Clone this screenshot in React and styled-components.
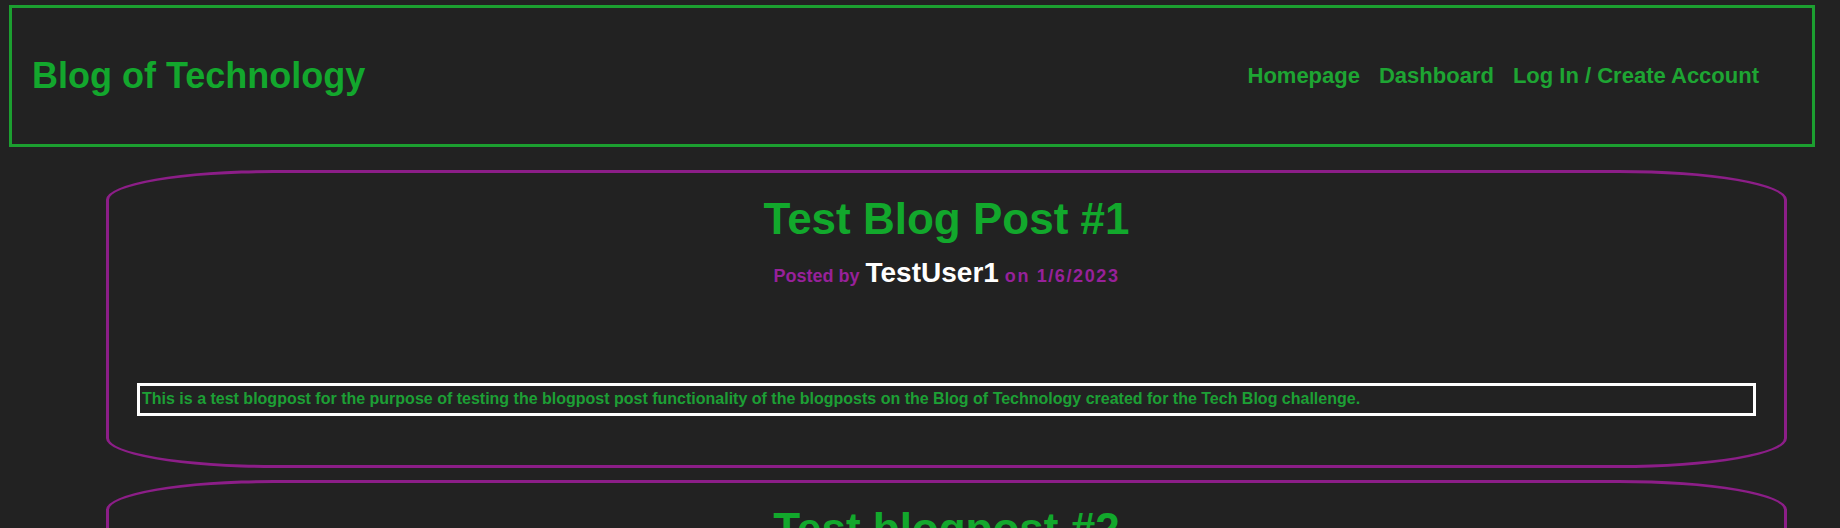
import React from "react";
import styled, { createGlobalStyle } from "styled-components";

const GlobalStyle = createGlobalStyle`
    body {
        margin: 0;
        background: #222222;
        font-family: "Liberation Sans", Arial, sans-serif;
        font-weight: 700;
    }
`;

const Page = styled.div`
    padding: 5px 25px 0 9px;
`;

const Header = styled.header`
    box-sizing: border-box;
    height: 142px;
    border: 3px solid #1c9f30;
    display: flex;
    align-items: center;
    justify-content: space-between;
    padding: 0 53px 0 20px;

    h1 {
        margin: 0;
        font-size: 36px;
        color: #13a72d;
    }
`;

const Nav = styled.nav`
    display: flex;
    gap: 19px;

    a {
        color: #1ea533;
        font-size: 22px;
        text-decoration: none;
    }
`;

const Main = styled.main`
    display: flex;
    flex-direction: column;
    gap: 12px;
    margin: 23px 28px 0 97px;
`;

const Card = styled.article`
    border: 3px solid #8c1e88;
    border-radius: 10%;
    padding: 19px 28px 49px;
    text-align: center;
`;

const Title = styled.h2`
    margin: 0;
    font-size: 44px;
    line-height: 53px;
    color: #12a82c;
`;

const Byline = styled.div`
    margin-top: 12px;
    display: flex;
    justify-content: center;
    align-items: baseline;
    gap: 6px;
    line-height: 31px;
    font-size: 18px;
    color: #97219a;
`;

const Author = styled.span`
    font-size: 28px;
    color: #ffffff;
`;

const PostDate = styled.span`
    letter-spacing: 1.6px;
`;

const Body = styled.p`
    margin: 91px 0 0;
    border: 3px solid #ffffff;
    padding: 3px 2px 4px;
    text-align: left;
    font-size: 16px;
    line-height: 20px;
    color: #1d9f35;
`;

const posts = [
    {
        id: 1,
        title: "Test Blog Post #1",
        user: "TestUser1",
        date: "1/6/2023",
        body: "This is a test blogpost for the purpose of testing the blogpost post functionality of the blogposts on the Blog of Technology created for the Tech Blog challenge.",
    },
    {
        id: 2,
        title: "Test blogpost #2",
        user: "TestUser1",
        date: "1/6/2023",
        body: "This is a second test blogpost.",
    },
];

const App = () => {
    return (
        <Page>
            <GlobalStyle />
            <Header>
                <h1>Blog of Technology</h1>
                <Nav>
                    <a href="#home">Homepage</a>
                    <a href="#dashboard">Dashboard</a>
                    <a href="#login">Log In / Create Account</a>
                </Nav>
            </Header>
            <Main>
                {posts.map((post) => (
                    <Card key={post.id}>
                        <Title>{post.title}</Title>
                        <Byline>
                            <span>Posted by</span>
                            <Author>{post.user}</Author>
                            <PostDate>on {post.date}</PostDate>
                        </Byline>
                        <Body>{post.body}</Body>
                    </Card>
                ))}
            </Main>
        </Page>
    );
};

export default App;
